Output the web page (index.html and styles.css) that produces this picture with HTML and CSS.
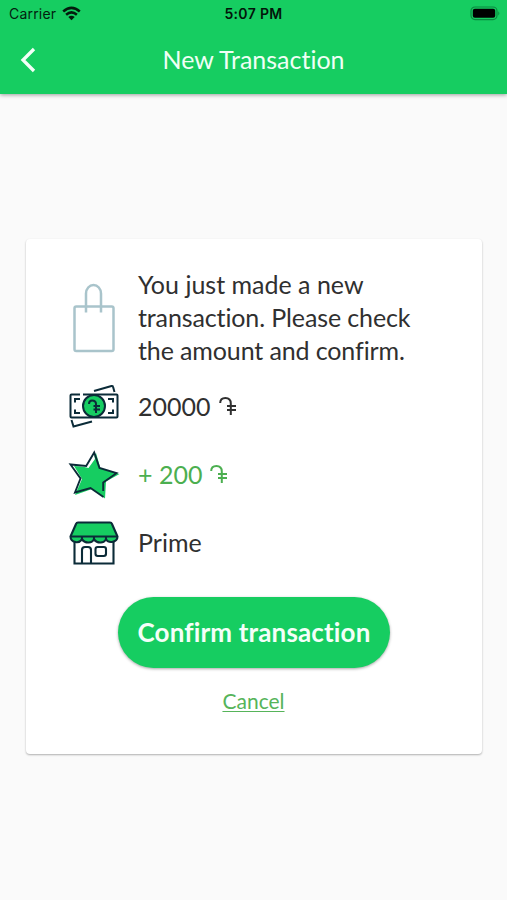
FILE: index.html
```html
<!DOCTYPE html>
<html lang="en">
<head>
<meta charset="utf-8">
<title>New Transaction</title>
<link rel="stylesheet" href="styles.css">
</head>
<body>
<header class="top">
  <div class="status">
    <div class="carrier"><span>Carrier</span>
      <svg width="19" height="15" viewBox="0 0 19 15" fill="none" stroke="#031c0d" stroke-width="2.6"><path d="M1.2 5.4Q9.5-1.500 17.8 5.400M4.100 8.700Q9.500 4.200 14.900 8.700"/><path d="M6.3 11Q9.500 8.400 12.700 11L9.500 14.200Z" fill="#031c0d" stroke="none"/></svg>
    </div>
    <span class="time">5:07 PM</span>
    <svg class="battery" width="31" height="15" viewBox="0 0 31 15"><rect x="1" y="1" width="26" height="12.6" rx="4" fill="none" stroke="#0b8a40" stroke-width="1.2"/><rect x="2.8" y="2.8" width="22.4" height="9" rx="2" fill="#000"/><path d="M28.3 5.2Q30.4 7.3 28.3 9.4Z" fill="#0b8a40"/></svg>
  </div>
  <div class="bar">
    <svg class="back" width="20" height="26" viewBox="0 0 20 26" fill="none" stroke="#f4fff8" stroke-width="3.3"><path d="M16 2L5 13L16 24"/></svg>
    <h1>New Transaction</h1>
  </div>
</header>
<main class="card">
  <div class="row intro">
    <svg class="icon" width="52" height="76" viewBox="0 0 52 76" fill="none" stroke="#a9c4cb" stroke-width="2.5"><rect x="6.500" y="27.500" width="39" height="44.500" rx="1.8"/><path d="M18 33.500V14.500A7.500 8.500 0 0 1 33 14.500V33.500"/></svg>
    <p>You just made a new<br><span class="tight">transaction. Please check</span><br><span class="tight">the amount and confirm.</span></p>
  </div>
  <div class="row">
    <svg class="icon" width="52" height="48" viewBox="0 0 52 48" fill="none" stroke="#0b2b38" stroke-width="2"><path d="M12 12.500H3.500Q2.500 12.500 2.500 13.500V34.500Q2.500 35.500 3.500 35.500H48.500Q49.500 35.500 49.500 34.500V13.500Q49.500 12.500 48.500 12.500H15"/><path d="M26 9L43.500 4Q44.800 3.700 45.100 5L46.500 10M3.500 38L5.500 44.500L24 39.500"/><path d="M7 20.500V17H12M7 27.500V31H12M40 17H45V20.500M40 31H45V27.500"/><circle cx="26" cy="24" r="11" fill="#16cd61"/><path d="M21 22Q21 18.500 24 18.500Q28 18.500 28 22V31M25.500 24H32M25.500 27.500H32"/></svg>
    <p class="amount">20000 <svg class="dram" width="18" height="20" viewBox="0 0 18 20" role="img" aria-label="dram"><path d="M1.200 7Q1.200 2 6.400 2Q11.800 2 11.800 7.500V19M8 10H17M8 14H17"/></svg></p>
  </div>
  <div class="row">
    <svg class="icon" width="52" height="52" viewBox="0 0 52 52"><path d="M28 5L32.500 20.500L51.500 26L38 33.500L37 50.500L24 41L7 47L14 31L6 18L20 19Z" fill="#16cd61"/><path d="M18.500 17L26 7L27 11L20.500 20L6 16.500L4 16.500Z" fill="#fff"/><path d="M35.200 43V34.500L48.500 25.200L31.500 20L26.200 4.500L18.200 18L2.500 16.500L12.500 30.500L7 44.500L22.500 40L35.500 49" fill="none" stroke="#0b2b38" stroke-width="1.900"/></svg>
    <p class="bonus">+ 200 <svg class="dram" width="18" height="20" viewBox="0 0 18 20" role="img" aria-label="dram"><path d="M1.200 7Q1.200 2 6.400 2Q11.800 2 11.800 7.500V19M8 10H17M8 14H17"/></svg></p>
  </div>
  <div class="row">
    <svg class="icon" width="52" height="48" viewBox="0 0 52 48" fill="none" stroke="#0b2b38" stroke-width="2.100"><path d="M6.500 22V45.500H45.500V22M14 45V32Q14 29 17 29H20Q23 29 23 32V45"/><rect x="27.500" y="29" width="10.500" height="9" rx="2.200"/><path d="M10 4.500H42Q43.500 4.500 44 6L49.500 18.500Q49.500 23 44 24Q40 24.500 38 21.500Q35.500 25 32 24.500Q28.500 24.500 26 21.500Q23.500 25 20 24.500Q16.500 24.500 14 21.500Q11 25 7.500 24Q2.500 23 2.500 18.500L8 6Q8.500 4.500 10 4.500Z" fill="#16cd61"/><path d="M3 18.500H49M14 18.500V22M26 18.500V22M38 18.500V22"/></svg>
    <p class="shop">Prime</p>
  </div>
  <button class="confirm">Confirm transaction</button>
  <a class="cancel">Cancel</a>
</main>
</body>
</html>
```
FILE: styles.css
```css
* { box-sizing: border-box; }
body { margin: 0; height: 900px; background: #fafafa; font-family: Lato, sans-serif; font-variant-ligatures: none; color: #303030; overflow: hidden; }
svg { display: block; flex: none; }
.top { height: 94px; background: #16cd61; box-shadow: 0 1px 4px rgba(0,0,0,.38); }
.status { height: 27px; display: grid; grid-template-columns: 1fr auto 1fr; align-items: center; padding: 0 6px 0 9px; font-family: Inter, sans-serif; font-size: 14px; color: #03200f; }
.carrier { display: flex; align-items: center; gap: 6px; letter-spacing: .2px; }
.carrier svg { margin-top: -1px; }
.time { font-weight: 600; letter-spacing: .35px; color: #02150a; margin-right: 3px; }
.battery { justify-self: end; }
.bar { height: 65px; display: grid; grid-template-columns: 60px 1fr 60px; align-items: center; }
.back { margin-left: 18px; }
h1 { margin: 0 0 2px; text-align: center; font-size: 25px; font-weight: 400; color: #effff5; white-space: nowrap; }
.card { width: 456px; height: 515px; margin: 145px 0 0 26px; padding: 29px 0 0 42px; background: #fff; border-radius: 4px; box-shadow: 0 1px 2px rgba(0,0,0,.3); display: flex; flex-direction: column; }
.row { display: flex; align-items: center; gap: 18px; height: 68px; }
.row p { margin: 0; font-size: 25px; line-height: 33px; white-space: nowrap; }
.intro { height: 104px; }
.intro .icon { margin-bottom: 7px; }
.row.intro p { margin-bottom: 6px; }
.tight { letter-spacing: -.12px; }
.amount, .bonus { display: flex; align-items: center; gap: 8px; }
.row .bonus { color: #4caf50; }
.dram { fill: none; stroke: currentColor; stroke-width: 2; }
.confirm { width: 272px; height: 71px; margin: 21px 0 0 50px; padding: 0 0 2px; border: 0; border-radius: 36px; background: #16cd61; color: #f4fff8; font-family: Lato, sans-serif; font-weight: 700; font-size: 26px; letter-spacing: .15px; font-variant-ligatures: none; box-shadow: 0 1px 3px rgba(0,0,0,.35); white-space: nowrap; }
.cancel { margin: 20px 43px 0 0; text-align: center; font-size: 21px; line-height: 26px; color: #56b45a; text-decoration: underline; text-decoration-thickness: 1px; text-underline-offset: 2px; }
```
